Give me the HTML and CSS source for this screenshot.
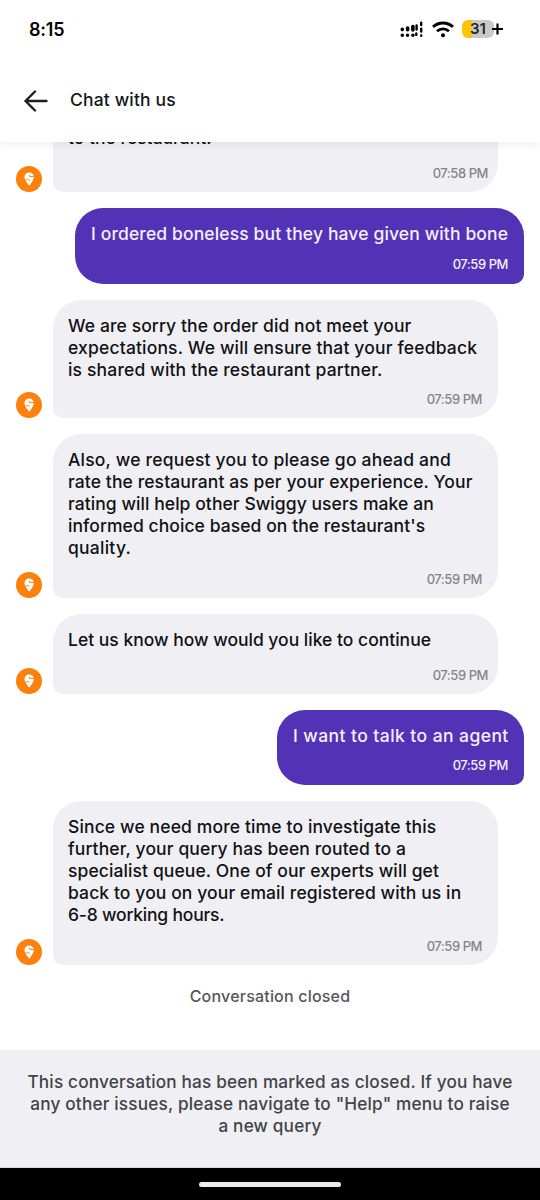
FILE: index.html
```html
<!DOCTYPE html>
<html lang="en">
<head>
<meta charset="utf-8">
<title>Chat with us</title>
<link rel="stylesheet" href="styles.css">
</head>
<body>
<svg class="defs" width="0" height="0" aria-hidden="true">
  <symbol id="pin" viewBox="0 0 26 26">
    <circle cx="13" cy="13" r="13" fill="#ff810b"/>
    <path fill="#fff" d="M13.300 19.800C11.800 18 8.500 14 8.500 11c0-2.700 2-4.600 4.600-4.600 2.500 0 4.700 1.700 4.700 4.600 0 3-3 6.900-4.500 8.800z"/>
    <path fill="none" stroke="#ff810b" stroke-width=".9" d="M13.600 8.800v1.700h4.600M9.700 13.700c1.200-.200 2.700 0 4 .6"/>
  </symbol>
</svg>
<div class="phone">
  <header class="top">
    <div class="status">
      <span class="clock">8:15</span>
      <div class="indicators">
        <svg width="23" height="18" viewBox="0 0 23 18" fill="none" stroke="#000" stroke-width="3.600" stroke-linecap="round">
          <path d="M2.300 9.300v.300M7.600 8v1.800M12.900 6.500v3.500"/>
          <path d="M2.300 15.200v.100M7.600 15.200v.100M12.900 15.200v.100"/>
          <path stroke-width="2.400" d="M16.600 5.500v4M16.300 13.500v1.400M21.200 2.800v2.200M21.200 8.700v2.800M21.200 15.500v.200"/>
        </svg>
        <svg class="wifi" width="22" height="17" viewBox="0 0 22 17" fill="none" stroke="#000" stroke-width="2.900">
          <path d="M1 5.900C6.500.600 15.500.600 21 5.900M5 10.300c3.500-3.300 8.500-3.300 12 0"/>
          <circle cx="11" cy="14.200" r="2" fill="#000" stroke="none"/>
        </svg>
        <span class="battery">31</span>
        <svg class="plus" width="11" height="12" viewBox="0 0 11 12" stroke="#000" stroke-width="2.200"><path d="M0 6h11M5.500.500v11"/></svg>
      </div>
    </div>
    <div class="bar">
      <svg width="24" height="22" viewBox="0 0 24 22" fill="none" stroke="#1d1f24" stroke-width="2.400" stroke-linecap="round" stroke-linejoin="round"><path d="M11 1.500 1.500 11l9.500 9.500M1.500 11H22.500"/></svg>
      <h1>Chat with us</h1>
    </div>
  </header>
  <main class="chat">
    <div class="row bot r1"><svg class="avatar"><use href="#pin"/></svg><div class="bubble near"><p>to the restaurant.</p><time>07:58 PM</time></div></div>
    <div class="row user r2"><div class="bubble"><p><span class="a1">I ordered boneless but they have given with bone</span></p><time>07:59 PM</time></div></div>
    <div class="row bot r3"><svg class="avatar"><use href="#pin"/></svg><div class="bubble"><p><span class="b1">We are sorry the order did not meet your</span><br><span class="b2">expectations. We will ensure that your feedback</span><br><span class="b3">is shared with the restaurant partner.</span></p><time>07:59 PM</time></div></div>
    <div class="row bot r4"><svg class="avatar"><use href="#pin"/></svg><div class="bubble"><p><span class="c1">Also, we request you to please go ahead and</span><br><span class="c2">rate the restaurant as per your experience. Your</span><br><span class="c3">rating will help other Swiggy users make an</span><br><span class="c4">informed choice based on the restaurant's</span><br><span class="c5">quality.</span></p><time>07:59 PM</time></div></div>
    <div class="row bot r5"><svg class="avatar"><use href="#pin"/></svg><div class="bubble near"><p>Let us know how would you like to continue</p><time>07:59 PM</time></div></div>
    <div class="row user r6"><div class="bubble"><p><span class="e1">I want to talk to an agent</span></p><time>07:59 PM</time></div></div>
    <div class="row bot r7"><svg class="avatar"><use href="#pin"/></svg><div class="bubble"><p><span class="f1">Since we need more time to investigate this</span><br><span class="f2">further, your query has been routed to a</span><br><span class="f3">specialist queue. One of our experts will get</span><br><span class="f4">back to you on your email registered with us in</span><br><span class="f5">6-8 working hours.</span></p><time>07:59 PM</time></div></div>
    <div class="ended">Conversation closed</div>
  </main>
  <footer class="notice">This conversation has been marked as closed. If you have<br>any other issues, please navigate to "Help" menu to raise<br>a new query</footer>
  <div class="home"><i></i></div>
</div>
</body>
</html>
```
FILE: styles.css
```css
* { box-sizing: border-box; }
body { margin: 0; background: #fff; font-family: Inter, "Liberation Sans", sans-serif; }
.defs { display: block; height: 0; }
.phone { width: 540px; height: 1200px; display: flex; flex-direction: column; overflow: hidden; }
.top { flex: none; height: 142px; background: #fff; box-shadow: 0 2px 10px rgba(0,0,0,.08); z-index: 1; position: relative; }
.status { height: 58px; display: flex; justify-content: space-between; align-items: center; padding: 0 37px 0 29px; }
.clock { font-size: 18px; font-weight: 600; letter-spacing: -.2px; }
.indicators { display: flex; align-items: center; }
.wifi { margin: 0 8px 0 9px; }
.battery { width: 32px; height: 18px; border-radius: 6px; background: linear-gradient(90deg, #ffc408 10px, #c9c9c9 10px); font-size: 15px; line-height: 18px; font-weight: 600; text-align: center; color: #262626; }
.plus { margin-left: -2px; }
.bar { height: 85px; display: flex; align-items: center; padding: 0 0 0 24px; gap: 22px; }
.bar h1 { margin: -2px 0 0; font-size: 17.500px; line-height: 24px; font-weight: 500; color: #15171b; letter-spacing: .15px; }
.chat { height: 908px; flex: none; display: flex; flex-direction: column; gap: 16px; overflow: hidden; }
.row { display: flex; flex: none; align-items: flex-end; }
.bot { padding-left: 16px; gap: 11px; }
.user { justify-content: flex-end; padding-right: 16px; }
.avatar { width: 26px; height: 26px; flex: none; }
.bubble { height: 100%; display: flex; flex-direction: column; justify-content: space-between; padding: 15px 16px 11px; white-space: nowrap; }
.bot .bubble { width: 445px; background: #f0eff4; color: #101216; border-radius: 28px 28px 28px 10px; padding-left: 15px; }
.user .bubble { background: #5232b5; color: #f5effd; border-radius: 28px 28px 10px 28px; padding-bottom: 12px; }
.bubble p { margin: 0; font-size: 17.500px; line-height: 22px; font-weight: 500; }
.bubble time { align-self: flex-end; font-size: 13px; line-height: 16px; font-weight: 500; color: #84858a; letter-spacing: -.45px; }
.bot .near { padding-right: 10px; }
.user .bubble time { color: #f5effd; }
.r1 { height: 80px; margin-top: -30px; }
.r2 { height: 76px; }
.r2 .bubble { width: 449px; }
.r3 { height: 118px; }
.r4 { height: 164px; }
.r5 { height: 80px; }
.r6 { height: 75px; }
.r6 .bubble { width: 247px; }
.r7 { height: 164px; }
/* tracking per line */
.a1, .f1 { letter-spacing: .13px; }
.b1, .c2, .f3, .f4 { letter-spacing: .1px; }
.b2, .b3 { letter-spacing: .165px; }
.c1 { letter-spacing: .2px; }
.c3, .c4 { letter-spacing: .065px; }
.c5 { letter-spacing: .25px; }
.e1 { letter-spacing: .43px; }
.f2 { letter-spacing: .12px; }
.f5 { letter-spacing: -.2px; }
.ended { text-align: center; font-size: 16px; font-weight: 500; line-height: 32px; color: #55565d; margin-top: -1px; letter-spacing: .2px; }
.notice { flex: none; height: 118px; padding-top: 21px; background: #f0eff4; border-bottom: 1px solid #d9d9dc; text-align: center; font-size: 17.200px; line-height: 22px; font-weight: 500; color: #424348; white-space: nowrap; letter-spacing: .18px; }
.home { flex: none; height: 32px; background: #000; display: flex; justify-content: center; align-items: center; }
.home i { width: 142px; height: 5px; border-radius: 3px; background: #ececec; }
```
